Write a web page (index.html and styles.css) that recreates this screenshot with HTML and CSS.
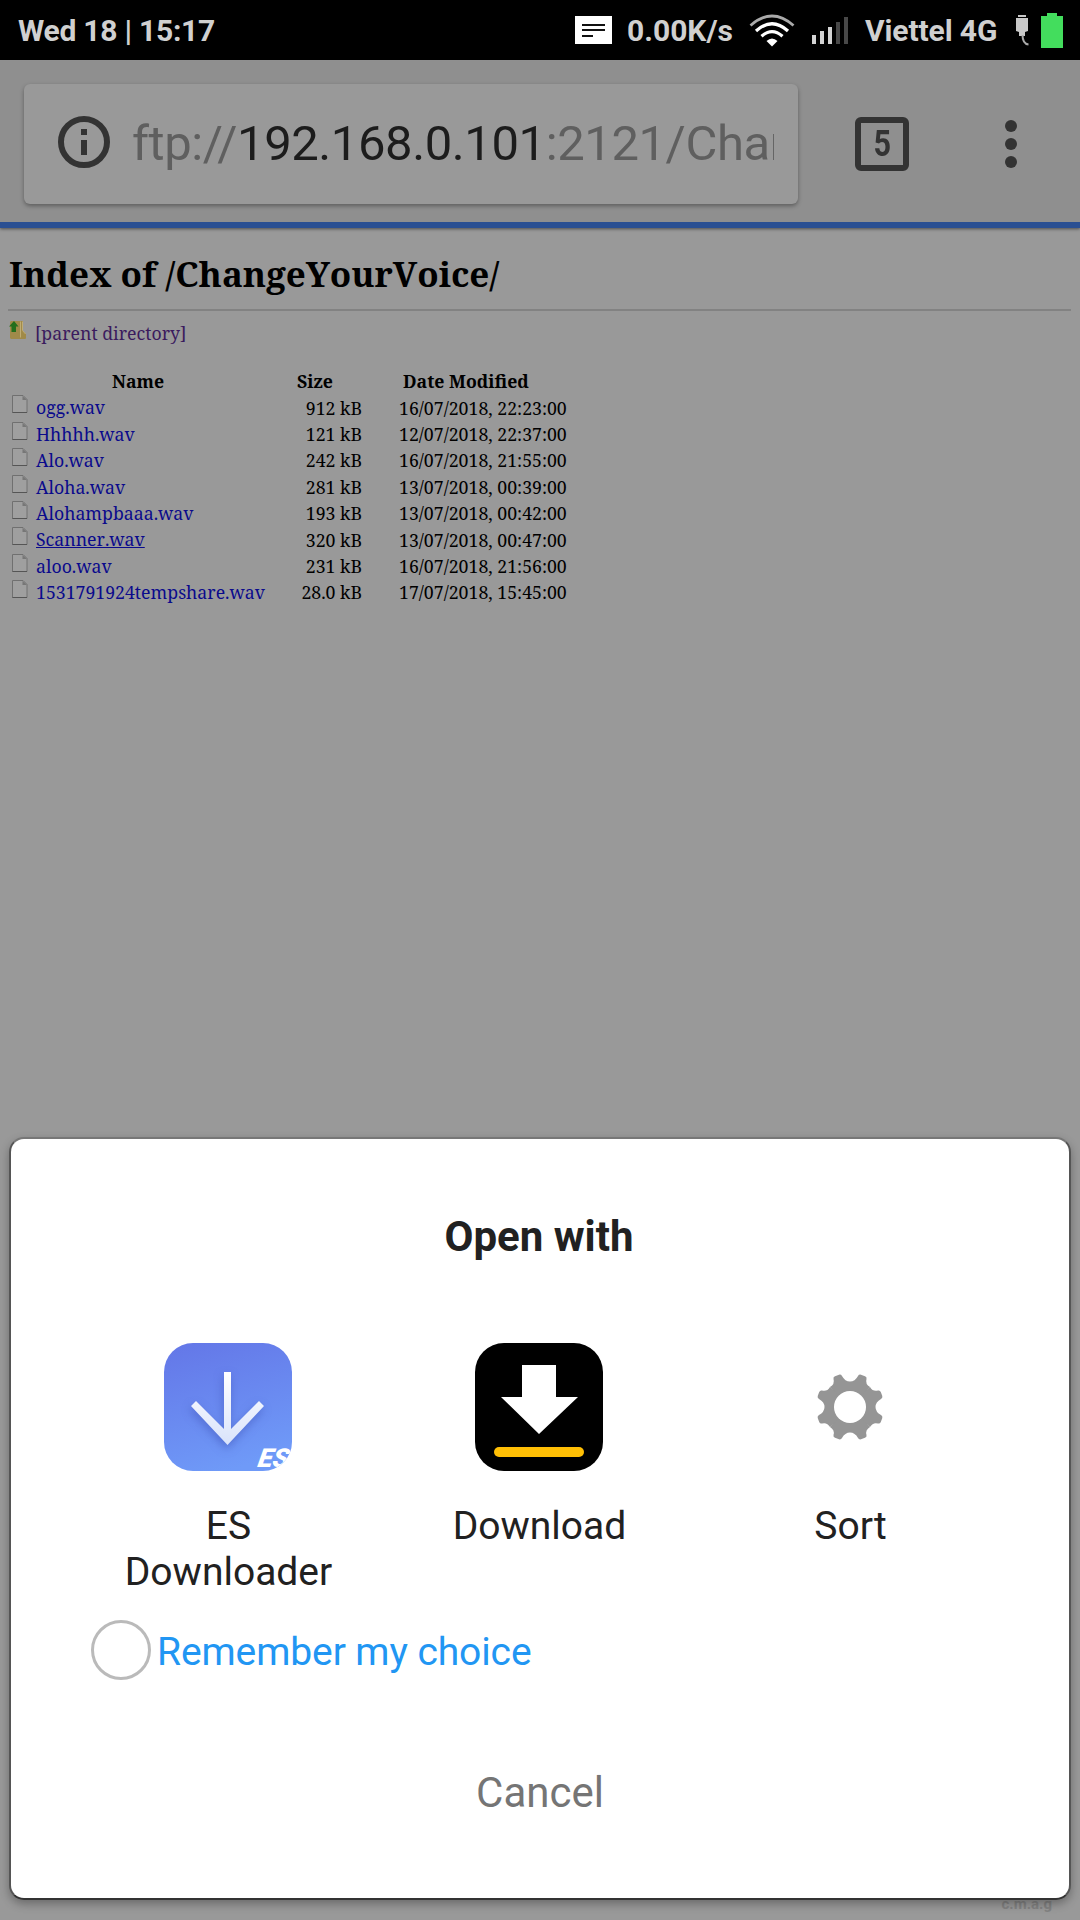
FILE: index.html
```html
<!DOCTYPE html>
<html lang="en">
<head>
  <meta charset="UTF-8" />
  <meta name="viewport" content="width=device-width, initial-scale=1.0" />
  <title>Index of /ChangeYourVoice/</title>
  <link rel="stylesheet" href="styles.css">
</head>
<body>

  <!-- Status bar -->
  <div class="status-bar">
    <span class="clock">Wed 18 | 15:17</span>
    <svg class="note-icon" width="37" height="28" viewBox="0 0 37 28">
      <rect width="37" height="28" fill="#fff"/>
      <path d="M7 9h23M7 14h23M7 20h11" stroke="#111" stroke-width="2"/>
    </svg>
    <span class="speed">0.00K/s</span>
    <svg class="wifi-icon" width="46" height="33" viewBox="0 0 46 33" fill="none" stroke="#fff" stroke-width="3.2">
      <path d="M1.5 11.5Q23-7.500 44.500 11.500" stroke="#aaa" stroke-width="2.800"/>
      <path d="M7 17Q23 2.500 39 17"/>
      <path d="M12.500 22.300Q23 13 33.500 22.300"/>
      <path d="M17.500 27Q23 22 28.500 27L23 32.500z" fill="#fff" stroke="none"/>
    </svg>
    <svg class="signal-icon" width="36" height="27" viewBox="0 0 36 27" fill="#d4d4d4">
      <path d="M0 18h4v9H0zM8 14h4v13H8zM16 10h4v17h-4z"/>
      <path d="M24 5h4v22h-4zM32 0h4v27h-4z" fill="#484848"/>
    </svg>
    <span class="carrier">Viettel 4G</span>
    <svg class="plug-icon" width="14" height="31" viewBox="0 0 14 31">
      <path d="M3 0h8v2H3zM1 3h12v13l-3 1v4H4v-4l-3-1z" fill="#c8c8c8"/>
      <path d="M7.500 20c0 6 2 9 6 9.500" fill="none" stroke="#aaa" stroke-width="2"/>
    </svg>
    <svg class="battery-icon" width="22" height="35" viewBox="0 0 22 35">
      <path d="M6 0h10v3h6v32H0V3h6z" fill="#43dd5d"/>
    </svg>
  </div>

  <!-- Browser toolbar -->
  <header class="toolbar">
    <div class="omnibox">
      <svg class="info-icon" width="52" height="52" viewBox="0 0 52 52">
        <circle cx="26" cy="26" r="23" fill="none" stroke="#333" stroke-width="6"/>
        <path d="M23 13h6v6h-6zM23 24h6v15h-6z" fill="#333"/>
      </svg>
      <div class="url">ftp://<b>192.168.0.101</b>:2121/Chan</div>
    </div>
    <div class="tab-count"><span>5</span></div>
    <svg class="menu-icon" width="12" height="48" viewBox="0 0 12 48" fill="#333">
      <circle cx="6" cy="6" r="6"/><circle cx="6" cy="24" r="6"/><circle cx="6" cy="42" r="6"/>
    </svg>
  </header>

  <!-- Directory listing -->
  <main class="listing">
    <h1>Index of /ChangeYourVoice/</h1>
    <div class="parent">
      <svg width="18" height="20" viewBox="0 0 18 20">
        <path d="M2 1h12v10l3 3v4.500l-1 .5H2l-1-1V2z" fill="#a08a49"/>
        <path d="M11.500 1.500v16M13.500 1.500v9l3 3.500" fill="none" stroke="#c0ad74"/>
        <path d="M0 6.500 5 1l4.500 5.500H7V12H2.500V6.500z" fill="#236f1c"/>
      </svg>
      <a href="#">[parent directory]</a>
    </div>

    <svg class="defs" width="0" height="0">
      <symbol id="file" viewBox="0 0 16 18">
        <path d="M.5.500h10.500l4 4v13H.5z" fill="#9f9f9f" stroke="#707070"/>
        <path d="M10.500 1v4H15z" fill="#777"/>
        <path d="M.5 17.500H15" stroke="#555"/>
      </symbol>
    </svg>
    <table>
      <thead>
        <tr><th class="name">Name</th><th class="size">Size</th><th class="date">Date Modified</th></tr>
      </thead>
      <tbody>
        <tr><td><svg><use href="#file"/></svg><a href="#">ogg.wav</a></td><td>912 kB</td><td>16/07/2018, 22:23:00</td></tr>
        <tr><td><svg><use href="#file"/></svg><a href="#">Hhhhh.wav</a></td><td>121 kB</td><td>12/07/2018, 22:37:00</td></tr>
        <tr><td><svg><use href="#file"/></svg><a href="#">Alo.wav</a></td><td>242 kB</td><td>16/07/2018, 21:55:00</td></tr>
        <tr><td><svg><use href="#file"/></svg><a href="#">Aloha.wav</a></td><td>281 kB</td><td>13/07/2018, 00:39:00</td></tr>
        <tr><td><svg><use href="#file"/></svg><a href="#">Alohampbaaa.wav</a></td><td>193 kB</td><td>13/07/2018, 00:42:00</td></tr>
        <tr><td><svg><use href="#file"/></svg><a href="#" class="active">Scanner.wav</a></td><td>320 kB</td><td>13/07/2018, 00:47:00</td></tr>
        <tr><td><svg><use href="#file"/></svg><a href="#">aloo.wav</a></td><td>231 kB</td><td>16/07/2018, 21:56:00</td></tr>
        <tr><td><svg><use href="#file"/></svg><a href="#">1531791924tempshare.wav</a></td><td>28.0 kB</td><td>17/07/2018, 15:45:00</td></tr>
      </tbody>
    </table>
  </main>

  <div class="watermark">c.m.a.g</div>

  <!-- Open with dialog -->
  <div class="dialog">
    <h2>Open with</h2>
    <div class="apps">
      <div class="app">
        <svg width="128" height="128" viewBox="0 0 128 128">
          <defs>
            <linearGradient id="esBg" x1="0.2" y1="0" x2="0.5" y2="1">
              <stop offset="0" stop-color="#6478e8"/>
              <stop offset="1" stop-color="#6f9af8"/>
            </linearGradient>
            <linearGradient id="esArrow" x1="0" y1="0" x2="0" y2="1">
              <stop offset="0" stop-color="#fff"/>
              <stop offset="1" stop-color="#d9e3fb"/>
            </linearGradient>
            <clipPath id="esClip"><rect width="128" height="128" rx="29"/></clipPath>
          </defs>
          <g clip-path="url(#esClip)">
            <rect width="128" height="128" fill="url(#esBg)"/>
            <path class="es-arrow" d="M60 29h7v57l28-28 5 5-36.500 39L27 63l5-5 28 28z" fill="url(#esArrow)"/>
            <text class="es-mark" transform="translate(93 124) skewX(-10)" textLength="31" lengthAdjust="spacingAndGlyphs">ES</text>
          </g>
        </svg>
        <span>ES Downloader</span>
      </div>
      <div class="app">
        <svg width="128" height="128" viewBox="0 0 128 128">
          <rect width="128" height="128" rx="29" fill="#000"/>
          <path d="M47 22h34v32h22L64 91 26 54h21z" fill="#fff"/>
          <rect x="19" y="104" width="90" height="10" rx="5" fill="#ffbf05"/>
        </svg>
        <span>Download</span>
      </div>
      <div class="app">
        <svg width="128" height="128" viewBox="-64 -64 128 128">
          <circle r="20" fill="none" stroke="#959595" stroke-width="9"/>
          <g fill="#959595">
            <path id="tooth" d="M-20-20Q-15-23-16.500-28Q-17-30-15-30.800L-11-32.300Q-9-32.800-8-31Q-5-25.500 0-25.500Q5-25.500 8-31Q9-32.800 11-32.300L15-30.800Q17-30 16.500-28Q15-23 20-20L12-11H-12z"/>
            <use href="#tooth" transform="rotate(90)"/>
            <use href="#tooth" transform="rotate(180)"/>
            <use href="#tooth" transform="rotate(270)"/>
          </g>
          <circle r="16" fill="#fff"/>
        </svg>
        <span>Sort</span>
      </div>
    </div>
    <label class="remember"><i class="check"></i><span>Remember my choice</span></label>
    <button type="button">Cancel</button>
  </div>

</body>
</html>
```

FILE: styles.css
```css
* {
  box-sizing: border-box;
}
body {
  margin: 0;
  width: 1080px;
  height: 1920px;
  position: relative;
  overflow: hidden;
  background: #999;
  font-family: Roboto, sans-serif;
}
svg {
  display: block;
  flex: none;
}
/* Status bar */
.status-bar {
  display: flex;
  align-items: center;
  height: 60px;
  padding: 0 17px 0 18px;
  background: #000;
  color: #d0d0d0;
  font-size: 30px;
  font-weight: 700;
  white-space: nowrap;
}
.clock {
  width: 557px;
  letter-spacing: -0.250px;
}
.speed {
  width: 122px;
  margin-left: 15px;
}
.signal-icon {
  margin-left: 17px;
}
.carrier {
  width: 150px;
  margin-left: 17px;
  letter-spacing: -0.100px;
}
.battery-icon {
  margin-left: 12px;
}
/* Browser toolbar */
.toolbar {
  display: flex;
  align-items: flex-start;
  height: 168px;
  padding: 24px 24px 0;
  background: #8f8f8f;
  border-bottom: 6px solid #2a4f92;
  box-shadow: 0 1px 3px rgba(0, 0, 0, 0.5);
}
.omnibox {
  display: flex;
  align-items: center;
  width: 774px;
  height: 120px;
  padding: 0 24px 0 34px;
  background: #999;
  border-radius: 6px;
  box-shadow: 0 2px 4px rgba(0, 0, 0, 0.35);
}
.info-icon {
  margin-top: -4px;
}
.url {
  flex: 1;
  width: 0;
  margin-left: 22px;
  overflow: hidden;
  white-space: nowrap;
  font-size: 49px;
  letter-spacing: -0.420px;
  line-height: 70px;
  color: #5f5f5f;
}
.url b {
  font-weight: 400;
  color: #1c1c1c;
}
.tab-count {
  width: 54px;
  height: 54px;
  margin: 33px 0 0 57px;
  border: 6px solid #333;
  border-radius: 6px;
  color: #333;
  font-size: 36px;
  font-weight: 700;
  line-height: 42px;
  text-align: center;
}
.tab-count span {
  display: inline-block;
  transform: scaleX(0.85);
}
.menu-icon {
  margin: 36px 0 0 96px;
}
/* Directory listing */
.listing {
  padding: 0 9px 0 8px;
  font-family: "Noto Serif", "DejaVu Serif Condensed", "DejaVu Serif", serif;
  font-size: 17.700px;
  font-kerning: none;
}
.listing a {
  color: #0a0a8c;
  text-decoration: none;
}
.listing a.active {
  text-decoration: underline;
}
.listing h1 {
  margin: 0;
  height: 83px;
  padding: 22px 0 0 1px;
  border-bottom: 2px solid #828282;
  font-size: 35px;
  letter-spacing: -0.050px;
  line-height: 48px;
  white-space: nowrap;
}
.parent {
  display: flex;
  height: 48px;
  padding-top: 9px;
  line-height: 26px;
}
.parent svg {
  margin: 0 8px 0 1px;
}
.listing .parent a {
  color: #3b1b5e;
}
.defs {
  position: absolute;
}
table {
  border-collapse: collapse;
  table-layout: fixed;
  width: 570px;
  margin-top: 9px;
  white-space: nowrap;
}
th,
td {
  height: 26.400px;
  padding: 0;
  line-height: 26px;
}
th.name {
  width: 260px;
}
th.size {
  width: 94px;
}
td:first-child {
  display: flex;
  padding-left: 4px;
}
td:first-child svg {
  width: 16px;
  height: 18px;
  margin: 1px 8px 0 0;
}
td:nth-child(2) {
  text-align: right;
}
td:last-child {
  padding-left: 37px;
}
th.date {
  text-align: left;
  padding-left: 41px;
}
/* Mark left in the bottom corner, partly covered by the dialog */
.watermark {
  position: absolute;
  right: 28px;
  bottom: 8px;
  color: #828282;
  font-size: 15px;
  font-weight: 700;
  line-height: 16px;
}
/* Open with dialog */
.dialog {
  position: absolute;
  left: 9px;
  top: 1137px;
  width: 1062px;
  height: 763px;
  padding: 74px 64px 0;
  background: #fff;
  border: 2px solid #555;
  border-top-color: #777;
  border-bottom-color: #333;
  border-radius: 15px;
  box-shadow: 0 4px 10px rgba(0, 0, 0, 0.3);
  color: #212121;
}
.dialog h2 {
  margin: 0 2px 0 0;
  font-size: 42px;
  line-height: 48px;
  text-align: center;
}
.apps {
  display: grid;
  grid-template-columns: repeat(3, 311px);
  height: 277px;
  margin: 82px 0 0 -3px;
}
.app {
  display: flex;
  flex-direction: column;
  align-items: center;
  font-size: 39px;
  line-height: 46px;
  text-align: center;
}
.app span {
  width: 220px;
  margin-top: 32px;
  padding-left: 2px;
}
.es-arrow {
  filter: drop-shadow(-1px 4px 4px rgba(60, 80, 180, 0.5));
}
.es-mark {
  fill: #fff;
  font: italic 900 26px Roboto, sans-serif;
}
.remember {
  display: flex;
  align-items: center;
  height: 60px;
  margin-left: 16px;
  font-size: 39px;
  letter-spacing: -0.100px;
  color: #2196f3;
}
.remember span {
  padding-top: 4px;
}
.check {
  width: 60px;
  height: 60px;
  margin-right: 6px;
  border: 3px solid #bababa;
  border-radius: 50%;
}
.dialog button {
  display: block;
  width: 100%;
  margin-top: 88px;
  padding: 0;
  border: 0;
  background: none;
  color: #757575;
  font: 42px/50px Roboto, sans-serif;
}
```
